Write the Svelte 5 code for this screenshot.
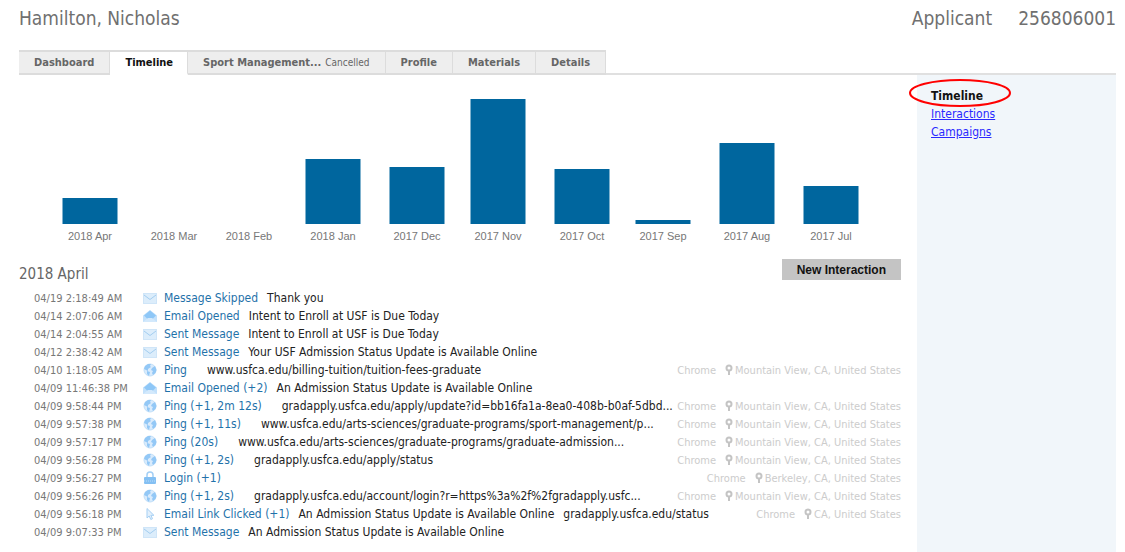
<script lang="ts">
	type Icon = 'mail' | 'opened' | 'globe' | 'lock' | 'cursor';

	interface Activity {
		time: string;
		icon: Icon;
		type: string;
		text?: string;
		url?: string;
		location?: string;
	}

	const tabs = [
		{ label: 'Dashboard' },
		{ label: 'Timeline', active: true },
		{ label: 'Sport Management...', note: 'Cancelled' },
		{ label: 'Profile' },
		{ label: 'Materials' },
		{ label: 'Details' }
	];

	// x is the centre of each month on the chart's own scale
	const months = [
		{ label: '2018 Apr', x: 71, value: 26 },
		{ label: '2018 Mar', x: 155, value: 0 },
		{ label: '2018 Feb', x: 230, value: 0 },
		{ label: '2018 Jan', x: 314, value: 65 },
		{ label: '2017 Dec', x: 398, value: 57 },
		{ label: '2017 Nov', x: 479, value: 125 },
		{ label: '2017 Oct', x: 563, value: 55 },
		{ label: '2017 Sep', x: 644, value: 4 },
		{ label: '2017 Aug', x: 728, value: 81 },
		{ label: '2017 Jul', x: 812, value: 38 }
	];
	const baseline = 149;
	const barWidth = 55;

	const activities: Activity[] = [
		{ time: '04/19 2:18:49 AM', icon: 'mail', type: 'Message Skipped', text: 'Thank you' },
		{ time: '04/14 2:07:06 AM', icon: 'opened', type: 'Email Opened', text: 'Intent to Enroll at USF is Due Today' },
		{ time: '04/14 2:04:55 AM', icon: 'mail', type: 'Sent Message', text: 'Intent to Enroll at USF is Due Today' },
		{ time: '04/12 2:38:42 AM', icon: 'mail', type: 'Sent Message', text: 'Your USF Admission Status Update is Available Online' },
		{ time: '04/10 1:18:05 AM', icon: 'globe', type: 'Ping', url: 'www.usfca.edu/billing-tuition/tuition-fees-graduate', location: 'Mountain View, CA, United States' },
		{ time: '04/09 11:46:38 PM', icon: 'opened', type: 'Email Opened (+2)', text: 'An Admission Status Update is Available Online' },
		{ time: '04/09 9:58:44 PM', icon: 'globe', type: 'Ping (+1, 2m 12s)', url: 'gradapply.usfca.edu/apply/update?id=bb16fa1a-8ea0-408b-b0af-5dbd...', location: 'Mountain View, CA, United States' },
		{ time: '04/09 9:57:38 PM', icon: 'globe', type: 'Ping (+1, 11s)', url: 'www.usfca.edu/arts-sciences/graduate-programs/sport-management/p...', location: 'Mountain View, CA, United States' },
		{ time: '04/09 9:57:17 PM', icon: 'globe', type: 'Ping (20s)', url: 'www.usfca.edu/arts-sciences/graduate-programs/graduate-admission...', location: 'Mountain View, CA, United States' },
		{ time: '04/09 9:56:28 PM', icon: 'globe', type: 'Ping (+1, 2s)', url: 'gradapply.usfca.edu/apply/status', location: 'Mountain View, CA, United States' },
		{ time: '04/09 9:56:27 PM', icon: 'lock', type: 'Login (+1)', location: 'Berkeley, CA, United States' },
		{ time: '04/09 9:56:26 PM', icon: 'globe', type: 'Ping (+1, 2s)', url: 'gradapply.usfca.edu/account/login?r=https%3a%2f%2fgradapply.usfc...', location: 'Mountain View, CA, United States' },
		{ time: '04/09 9:56:18 PM', icon: 'cursor', type: 'Email Link Clicked (+1)', text: 'An Admission Status Update is Available Online', url: 'gradapply.usfca.edu/status', location: 'CA, United States' },
		{ time: '04/09 9:07:33 PM', icon: 'mail', type: 'Sent Message', text: 'An Admission Status Update is Available Online' }
	];
</script>

<div class="page">
	<header>
		<h1>Hamilton, Nicholas</h1>
		<span class="role">Applicant</span>
		<span>256806001</span>
	</header>

	<nav class="tabs">
		{#each tabs as tab}
			<a href="#{tab.label}" class:active={tab.active}>
				{tab.label}{#if tab.note}<span class="note">{tab.note}</span>{/if}
			</a>
		{/each}
	</nav>

	<div class="body">
		<main>
			<svg class="chart" viewBox="0 0 882 170" role="img" aria-label="Activity by month">
				{#each months as m}
					{#if m.value > 0}
						<rect x={m.x - barWidth / 2} y={baseline - m.value} width={barWidth} height={m.value} />
					{/if}
					<text x={m.x} y={baseline + 16}>{m.label}</text>
				{/each}
			</svg>

			<div class="month-head">
				<h2>2018 April</h2>
				<button type="button">New Interaction</button>
			</div>

			<ol class="activities">
				{#each activities as a}
					<li>
						<time>{a.time}</time>
						<svg class="icon" viewBox="0 0 14 14" aria-hidden="true">
							{#if a.icon === 'mail'}
								<rect x="0.5" y="2.5" width="13" height="10" fill="#dcedfb" stroke="#cfe5f8" />
								<path d="M1 4l6 4.5L13 4" fill="none" stroke="#a3cdf0" />
							{:else if a.icon === 'opened'}
								<path d="M0 6.5L7 1l7 5.5V13H0z" fill="#c3e1fb" />
								<path d="M1 6.5L7 1.5l6 5L9.5 10h-5z" fill="#8ec7f7" />
								<path d="M0 13l5-4h4l5 4z" fill="#d3e9fc" />
							{:else if a.icon === 'globe'}
								<circle cx="7" cy="7" r="6" fill="#d9ebfc" stroke="#c3e0f9" />
								<path d="M2 3l3-2h3L7 3l1 1-3 2v2L3 7 1 6zM9 5l3-2 1.5 4-1 3-2.5 2-1-2 1-2-2-1zM4 8l3 1-1 4-2-2z" fill="#93c8f6" />
							{:else if a.icon === 'lock'}
								<path d="M4 6V4a3 3 0 0 1 6 0v2" fill="none" stroke="#a3cff5" stroke-width="1.5" />
								<rect x="1" y="6" width="12" height="7" rx="1" fill="#84c0f3" />
								<path d="M1 10h12" stroke="#b9dcf9" stroke-dasharray="1 1" />
							{:else}
								<path d="M4 1.5V11l2.2-2 1.600 3.500 1.700-.8-1.600-3.400h3z" fill="#e3f0fc" stroke="#a5cff3" />
							{/if}
						</svg>
						<a class="type" href="#activity">{a.type}</a>
						{#if a.text}<span class="text">{a.text}</span>{/if}
						{#if a.url}<span class="text" class:page-url={!a.text}>{a.url}</span>{/if}
						{#if a.location}
							<span class="origin">
								<span class="browser">Chrome</span>
								<svg class="pin" viewBox="0 0 8 12" aria-hidden="true">
									<circle cx="4" cy="4" r="2.5" />
									<path d="M4 6.5V11" />
								</svg>
								{a.location}
							</span>
						{/if}
					</li>
				{/each}
			</ol>
		</main>

		<aside>
			<strong>
				Timeline
				<svg class="ring" viewBox="0 0 104 30" aria-hidden="true">
					<ellipse cx="52" cy="15" rx="50" ry="13" />
				</svg>
			</strong>
			<a href="#interactions">Interactions</a>
			<a href="#campaigns">Campaigns</a>
		</aside>
	</div>
</div>

<style>
	:global(body) {
		margin: 0;
		background: #fff;
	}

	.page {
		box-sizing: border-box;
		min-height: 100vh;
		display: flex;
		flex-direction: column;
		padding: 0 9px 0 19px;
		font-family: Tahoma, 'DejaVu Sans Condensed', 'DejaVu Sans', sans-serif;
		font-size: 12px;
		color: #222;
	}

	header {
		display: flex;
		align-items: center;
		height: 36px;
		margin-bottom: 14px;
		font-size: 19px;
		color: #707070;
	}

	h1 {
		flex: 1;
		margin: 0;
		font-size: 19px;
		font-weight: normal;
	}

	.role {
		margin-right: 26px;
	}

	/* Tabs */
	.tabs {
		display: flex;
	}

	.tabs::after {
		content: '';
		flex: 1;
		border-bottom: 2px solid #e0e0e0;
	}

	.tabs a {
		padding: 0 15px;
		border: solid #dcdcdc;
		border-width: 2px 1px 2px 0;
		background: #eee;
		color: #666;
		font-size: 11px;
		font-weight: bold;
		line-height: 21px;
		text-decoration: none;
		white-space: nowrap;
	}

	.tabs a.active {
		padding: 0 14px 0 15px;
		border-bottom-color: #fff;
		background: #fff;
		color: #111;
	}

	.note {
		margin-left: 4px;
		font-size: 10px;
		font-weight: normal;
	}

	/* Content */
	.body {
		flex: 1;
		display: flex;
		gap: 16px;
	}

	main {
		flex: 1;
		min-width: 0;
	}

	.chart {
		display: block;
		width: 100%;
	}

	.chart rect {
		fill: #00669e;
	}

	.chart text {
		fill: #777;
		font-family: 'Liberation Sans', Arial, sans-serif;
		font-size: 11px;
		text-anchor: middle;
	}

	.month-head {
		display: flex;
		align-items: flex-start;
		justify-content: space-between;
		margin-top: 14px;
	}

	h2 {
		margin: 6px 0 0;
		font-size: 15px;
		font-weight: normal;
		line-height: 18px;
		color: #666;
	}

	button {
		height: 21px;
		padding: 0 15px;
		border: 0;
		background: #c4c4c4;
		color: #111;
		font: bold 12px 'Liberation Sans', Arial, sans-serif;
	}

	.activities {
		margin: 6px 0 0;
		padding: 0 0 0 15px;
		list-style: none;
	}

	li {
		display: flex;
		align-items: center;
		height: 18px;
		white-space: nowrap;
	}

	time {
		width: 109px;
		font-size: 11px;
		color: #777;
	}

	.icon {
		flex: none;
		width: 14px;
		height: 14px;
		margin-right: 7px;
	}

	.type {
		color: #1f72aa;
		text-decoration: none;
	}

	.text {
		margin-left: 9px;
	}

	.page-url {
		margin-left: 20px;
	}

	.origin {
		display: flex;
		align-items: center;
		margin-left: auto;
		font-size: 11px;
		color: #ccc;
	}

	.browser {
		margin-right: 9px;
	}

	.pin {
		width: 8px;
		height: 12px;
		margin-right: 2px;
		fill: none;
		stroke: #c4c4c4;
		stroke-width: 2;
	}

	/* Side menu */
	aside {
		flex: 0 0 185px;
		display: flex;
		flex-direction: column;
		align-items: flex-start;
		padding: 12px 0 0 14px;
		background: #f1f6fa;
		line-height: 18px;
	}

	aside strong {
		position: relative;
		color: #111;
	}

	aside a {
		color: #2a2aff;
	}

	.ring {
		position: absolute;
		top: -9px;
		left: -23px;
		width: 104px;
		height: 30px;
		fill: none;
		stroke: #f00;
		stroke-width: 2;
	}
</style>
